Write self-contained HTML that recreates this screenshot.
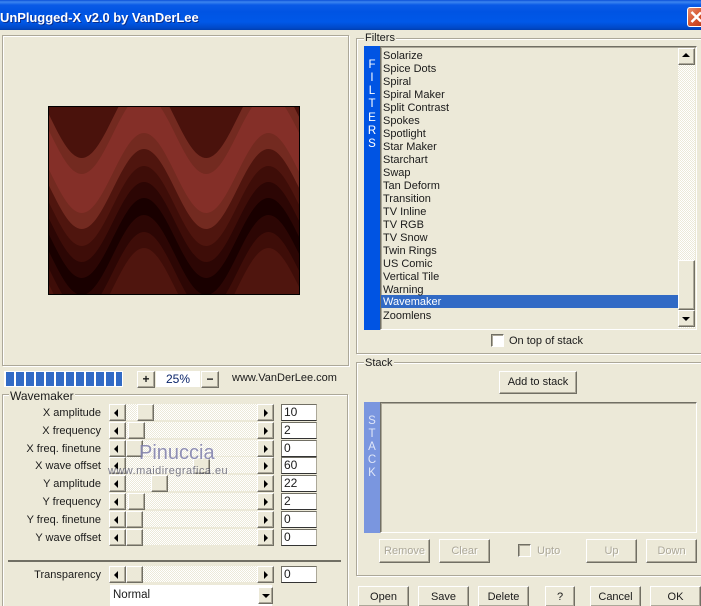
<!DOCTYPE html>
<html><head><meta charset="utf-8"><title>UnPlugged-X</title>
<style>
html,body{margin:0;padding:0;background:#ece9d8;overflow:hidden}
#r{position:relative;width:701px;height:606px;overflow:hidden;background:#ece9d8;font:11px/13px "Liberation Sans",sans-serif;color:#1a1a1a}
#r div,#r svg,#r span.t{position:absolute}
.t{white-space:nowrap}
.g{border:1px solid #aca899;box-shadow:1px 1px 0 #fff,inset 1px 1px 0 #fff}
.lb{background:#ece9d8;padding:0 1px;height:13px;line-height:13px}
.b{background:#ece9d8;border:1px solid;border-color:#fff #716f64 #716f64 #fff;box-shadow:inset -1px -1px 0 #aca899;box-sizing:border-box;text-align:center}
.s{box-sizing:border-box;border:1px solid;border-color:#716f64 #fff #fff #716f64;box-shadow:inset 1px 1px 0 #aca899}
.tr{left:126px;width:132px;height:16px;background:repeating-conic-gradient(#fff 0 25%,#ece9d8 0 50%) 0 0/2px 2px}
.bl,.br{width:17px;height:17px}
.bl{left:109px}.br{left:257px}
.bl:after,.br:after,.bu:after,.bd:after{content:"";position:absolute;width:0;height:0;border:4px solid transparent}
.bl:after{left:4px;top:4px;border-right-color:#000;border-left-width:0}
.br:after{left:6px;top:4px;border-left-color:#000;border-right-width:0}
.bu:after{left:3px;top:4px;border-bottom-color:#000;border-top-width:0}
.bd:after{left:3px;top:6px;border-top-color:#000;border-bottom-width:0}
.th{height:17px}
.rl{right:600px;text-align:right;white-space:nowrap;height:13px}
.e{left:281px;width:36px;height:17px;background:#fff;box-sizing:border-box;border:1px solid;border-color:#716f64 #aca899 #333 #716f64;padding-left:2px;font-size:12px;line-height:14px}
.i{left:383px;white-space:nowrap;height:13px}
.lt{left:364px;width:16px;text-align:center;color:#fff;height:13px;font-size:11.5px}
.d{color:#aca899;text-shadow:1px 1px 0 #fff;line-height:22px}
.bb{line-height:18px;padding-top:1px;top:586px;height:20px;border-bottom:0;overflow:hidden}
</style></head><body><div id="r">

<div style="left:0;top:0;width:701px;height:30px;background:linear-gradient(#0a50d8 0,#3d85f0 2px,#0a5ae6 5px,#0054e3 12px,#0058e8 22px,#0048c8 28px,#003fb0 30px)"></div>
<div class="t" style="left:0;top:9px;color:#fff;font:bold 13px/17px 'Liberation Sans',sans-serif;letter-spacing:-.05px;text-shadow:1px 1px 0 #0a2f90">UnPlugged-X v2.0 by VanDerLee</div>
<div style="left:687px;top:7px;width:14px;height:20px;border:1px solid #fff;border-right:0;border-radius:3px 0 0 3px;box-sizing:border-box;background:linear-gradient(135deg,#e88c6c,#d4532c 60%,#c03c1a)"></div>
<svg style="left:687px;top:7px" width="14" height="20" viewBox="0 0 14 20"><path d="M4.5 5 L14 14.5 M14 5.5 L4.5 15" stroke="#fff" stroke-width="2.5" fill="none"/></svg>

<div class="g" style="left:2px;top:35px;width:345px;height:329px"></div>
<svg style="left:49px;top:107px" width="250" height="187" viewBox="49 107 250 187">
<rect x="49" y="107" width="250" height="187" fill="#4a120c"/>
<path fill="#732a20" d="M19.5 78c22.7 0 39.5 80 62.25 80s39.5-80 62.25-80 39.5 80 62.25 80 39.5-80 62.25-80 39.5 80 62.25 80V294H19.5Z"/>
<path fill="#842f28" d="M19.5 94c22.7 0 39.5 80 62.25 80s39.5-80 62.25-80 39.5 80 62.25 80 39.5-80 62.25-80 39.5 80 62.25 80V294H19.5Z"/>
<path fill="#732a20" d="M19.5 133c22.7 0 39.5 80 62.25 80s39.5-80 62.25-80 39.5 80 62.25 80 39.5-80 62.25-80 39.5 80 62.25 80V294H19.5Z"/>
<path fill="#4f150e" d="M19.5 149c22.7 0 39.5 80 62.25 80s39.5-80 62.25-80 39.5 80 62.25 80 39.5-80 62.25-80 39.5 80 62.25 80V294H19.5Z"/>
<path fill="#3e0d08" d="M19.5 166c22.7 0 39.5 80 62.25 80s39.5-80 62.25-80 39.5 80 62.25 80 39.5-80 62.25-80 39.5 80 62.25 80V294H19.5Z"/>
<path fill="#2c0604" d="M19.5 182c22.7 0 39.5 80 62.25 80s39.5-80 62.25-80 39.5 80 62.25 80 39.5-80 62.25-80 39.5 80 62.25 80V294H19.5Z"/>
<path fill="#190000" d="M19.5 198c22.7 0 39.5 80 62.25 80s39.5-80 62.25-80 39.5 80 62.25 80 39.5-80 62.25-80 39.5 80 62.25 80V294H19.5Z"/>
<path fill="#2c0604" d="M19.5 215c22.7 0 39.5 80 62.25 80s39.5-80 62.25-80 39.5 80 62.25 80 39.5-80 62.25-80 39.5 80 62.25 80V294H19.5Z"/>
<path fill="#3e0d08" d="M19.5 232c22.7 0 39.5 80 62.25 80s39.5-80 62.25-80 39.5 80 62.25 80 39.5-80 62.25-80 39.5 80 62.25 80V294H19.5Z"/>
<path fill="#4f150e" d="M19.5 248c22.7 0 39.5 80 62.25 80s39.5-80 62.25-80 39.5 80 62.25 80 39.5-80 62.25-80 39.5 80 62.25 80V294H19.5Z"/>
</svg>
<div style="left:48px;top:106px;width:250px;height:187px;border:1px solid #000"></div>

<div style="left:4px;top:371px;width:119px;height:16px;background:#fff"></div>
<div style="left:6px;top:372px;width:116px;height:14px;background:repeating-linear-gradient(90deg,#316ac5 0 8px,#fff 8px 10px)"></div>
<div class="b" style="left:137px;top:371px;width:18px;height:17px;font:bold 12px/14px 'Liberation Sans',sans-serif">+</div>
<div style="left:156px;top:371px;width:44px;height:16px;background:#fff;color:#0a246a;text-align:center;line-height:16px;font-size:12px">25%</div>
<div class="b" style="left:201px;top:371px;width:18px;height:17px;font:bold 12px/14px 'Liberation Sans',sans-serif">−</div>
<div class="t" style="left:232px;top:372px;font-size:11px">www.VanDerLee.com</div>

<div class="g" style="left:2px;top:394px;width:344px;height:211px;border-bottom:0"></div>
<div class="t lb" style="left:9px;top:390px;font-size:12px">Wavemaker</div>

<!-- rows -->
<div class="tr" style="top:404px"></div><div class="b bl" style="top:404px"></div><div class="b br" style="top:404px"></div><div class="b th" style="left:137px;top:404px;width:17px"></div>
<div class="rl" style="top:407px">X amplitude</div><div class="e" style="top:404px">10</div>

<div class="tr" style="top:422px"></div><div class="b bl" style="top:422px"></div><div class="b br" style="top:422px"></div><div class="b th" style="left:128px;top:422px;width:17px"></div>
<div class="rl" style="top:425px">X frequency</div><div class="e" style="top:422px">2</div>

<div class="tr" style="top:440px"></div><div class="b bl" style="top:440px"></div><div class="b br" style="top:440px"></div><div class="b th" style="left:126px;top:440px;width:17px"></div>
<div class="rl" style="top:443px">X freq. finetune</div><div class="e" style="top:440px">0</div>

<div class="tr" style="top:457px"></div><div class="b bl" style="top:457px"></div><div class="b br" style="top:457px"></div><div class="b th" style="left:193px;top:457px;width:17px"></div>
<div class="rl" style="top:460px">X wave offset</div><div class="e" style="top:457px">60</div>

<div class="tr" style="top:475px"></div><div class="b bl" style="top:475px"></div><div class="b br" style="top:475px"></div><div class="b th" style="left:151px;top:475px;width:17px"></div>
<div class="rl" style="top:478px">Y amplitude</div><div class="e" style="top:475px">22</div>

<div class="tr" style="top:493px"></div><div class="b bl" style="top:493px"></div><div class="b br" style="top:493px"></div><div class="b th" style="left:128px;top:493px;width:17px"></div>
<div class="rl" style="top:496px">Y frequency</div><div class="e" style="top:493px">2</div>

<div class="tr" style="top:511px"></div><div class="b bl" style="top:511px"></div><div class="b br" style="top:511px"></div><div class="b th" style="left:126px;top:511px;width:17px"></div>
<div class="rl" style="top:514px">Y freq. finetune</div><div class="e" style="top:511px">0</div>

<div class="tr" style="top:529px"></div><div class="b bl" style="top:529px"></div><div class="b br" style="top:529px"></div><div class="b th" style="left:126px;top:529px;width:17px"></div>
<div class="rl" style="top:532px">Y wave offset</div><div class="e" style="top:529px">0</div>

<div style="left:8px;top:560px;width:333px;height:2px;background:#716f64"></div>

<div class="tr" style="top:566px"></div><div class="b bl" style="top:566px"></div><div class="b br" style="top:566px"></div><div class="b th" style="left:126px;top:566px;width:17px"></div>
<div class="rl" style="top:569px">Transparency</div><div class="e" style="top:566px">0</div>

<div style="left:110px;top:585px;width:162px;height:21px;background:#fff"></div>
<div class="t" style="left:113px;top:589px;font-size:11.5px">Normal</div>
<div class="b bd" style="left:258px;top:587px;width:15px;height:17px"></div>

<div class="t" style="left:139px;top:441px;font-size:20px;line-height:24px;color:rgba(125,125,170,.85);text-shadow:1px 1px 0 rgba(255,255,255,.5)">Pinuccia</div>
<div class="t" style="left:108px;top:465px;font-size:11px;letter-spacing:.45px;color:rgba(80,80,100,.75);text-shadow:1px 1px 0 rgba(255,255,255,.6)">www.maidiregrafica.eu</div>

<!-- Filters -->
<div class="g" style="left:356px;top:38px;width:344px;height:314px;border-right:0"></div>
<div class="t lb" style="left:364px;top:32px">Filters</div>
<div style="left:364px;top:46px;width:16px;height:284px;background:#0054e3"></div>
<div class="lt" style="top:59px">F</div><div class="lt" style="top:72px">I</div><div class="lt" style="top:85px">L</div><div class="lt" style="top:98px">T</div><div class="lt" style="top:112px">E</div><div class="lt" style="top:125px">R</div><div class="lt" style="top:138px">S</div>
<div class="s" style="left:380px;top:46px;width:317px;height:284px"></div>
<div style="left:678px;top:48px;width:17px;height:280px;background:repeating-conic-gradient(#fff 0 25%,#ece9d8 0 50%) 0 0/2px 2px"></div>
<div class="b bu" style="left:678px;top:48px;width:17px;height:17px"></div>
<div class="b" style="left:678px;top:260px;width:17px;height:50px"></div>
<div class="b bd" style="left:678px;top:310px;width:17px;height:17px"></div>
<div style="left:381px;top:295px;width:297px;height:13px;background:#316ac5"></div>
<div class="i" style="top:50px">Solarize</div>
<div class="i" style="top:63px">Spice Dots</div>
<div class="i" style="top:76px">Spiral</div>
<div class="i" style="top:89px">Spiral Maker</div>
<div class="i" style="top:102px">Split Contrast</div>
<div class="i" style="top:115px">Spokes</div>
<div class="i" style="top:128px">Spotlight</div>
<div class="i" style="top:141px">Star Maker</div>
<div class="i" style="top:154px">Starchart</div>
<div class="i" style="top:167px">Swap</div>
<div class="i" style="top:180px">Tan Deform</div>
<div class="i" style="top:193px">Transition</div>
<div class="i" style="top:206px">TV Inline</div>
<div class="i" style="top:219px">TV RGB</div>
<div class="i" style="top:232px">TV Snow</div>
<div class="i" style="top:245px">Twin Rings</div>
<div class="i" style="top:258px">US Comic</div>
<div class="i" style="top:271px">Vertical Tile</div>
<div class="i" style="top:284px">Warning</div>
<div class="i" style="top:296px;color:#fff">Wavemaker</div>
<div class="i" style="top:310px">Zoomlens</div>
<div class="s" style="left:491px;top:334px;width:13px;height:13px;background:#fff"></div>
<div class="t" style="left:509px;top:335px">On top of stack</div>

<!-- Stack -->
<div class="g" style="left:356px;top:362px;width:344px;height:212px;border-right:0"></div>
<div class="t lb" style="left:364px;top:357px">Stack</div>
<div class="b" style="left:499px;top:371px;width:78px;height:23px;line-height:20px">Add to stack</div>
<div style="left:364px;top:402px;width:16px;height:131px;background:#7a96df"></div>
<div class="lt" style="top:415px;color:#dfe6f8">S</div><div class="lt" style="top:428px;color:#dfe6f8">T</div><div class="lt" style="top:441px;color:#dfe6f8">A</div><div class="lt" style="top:454px;color:#dfe6f8">C</div><div class="lt" style="top:467px;color:#dfe6f8">K</div>
<div class="s" style="left:380px;top:402px;width:317px;height:131px"></div>
<div class="b d" style="left:379px;top:539px;width:51px;height:24px">Remove</div>
<div class="b d" style="left:439px;top:539px;width:51px;height:24px">Clear</div>
<div class="s" style="left:518px;top:544px;width:13px;height:13px"></div>
<div class="t d" style="left:537px;top:540px">Upto</div>
<div class="b d" style="left:586px;top:539px;width:51px;height:24px">Up</div>
<div class="b d" style="left:646px;top:539px;width:51px;height:24px">Down</div>

<div class="b bb" style="left:358px;width:51px">Open</div>
<div class="b bb" style="left:418px;width:51px">Save</div>
<div class="b bb" style="left:478px;width:51px">Delete</div>
<div class="b bb" style="left:545px;width:30px">?</div>
<div class="b bb" style="left:590px;width:51px">Cancel</div>
<div class="b bb" style="left:650px;width:51px">OK</div>
</div></body></html>
